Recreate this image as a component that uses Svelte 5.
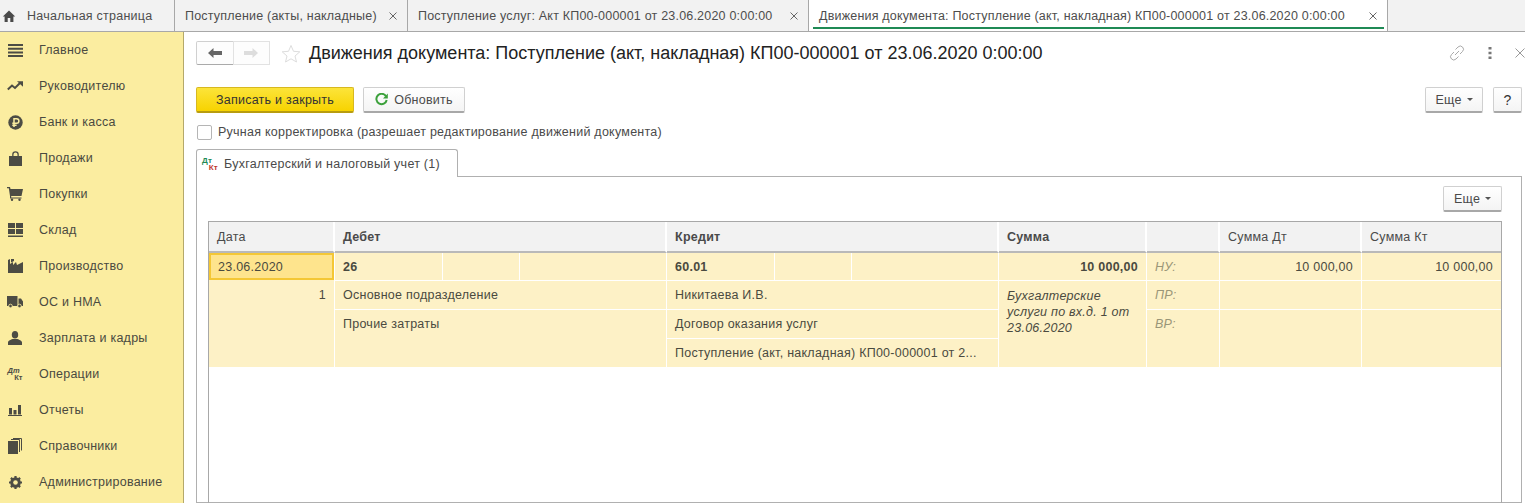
<script>
  const nav = [
    ['Главное', 'menu'], ['Руководителю', 'trend'], ['Банк и касса', 'rub'], ['Продажи', 'bag'],
    ['Покупки', 'cart'], ['Склад', 'stock'], ['Производство', 'factory'], ['ОС и НМА', 'truck'],
    ['Зарплата и кадры', 'user'], ['Операции', 'dtkt'], ['Отчеты', 'chart'], ['Справочники', 'books'],
    ['Администрирование', 'gear']
  ];
  const tabs = [
    { t: 'Поступление (акты, накладные)', w: 233 },
    { t: 'Поступление услуг: Акт КП00-000001 от 23.06.2020 0:00:00', w: 401 }
  ];
</script>

<div class="app">
  <header class="tabs">
    <div class="tab home">
      <svg width="14" height="14" viewBox="0 0 14 14"><path d="M7 1.5 0.8 7.5H2.6V13H5.7V9H8.3V13H11.4V7.5H13.2Z" fill="#4a4a4a"/></svg>
      <span>Начальная страница</span>
    </div>
    {#each tabs as tab}
      <div class="tab" style="width:{tab.w}px">
        <span>{tab.t}</span>
        <svg class="x" width="8" height="8" viewBox="0 0 8 8"><path d="M.5.5l7 7M7.5.5l-7 7" stroke="#666" fill="none"/></svg>
      </div>
    {/each}
    <div class="tab active">
      <span>Движения документа: Поступление (акт, накладная) КП00-000001 от 23.06.2020 0:00:00</span>
      <svg class="x" width="8" height="8" viewBox="0 0 8 8"><path d="M.5.5l7 7M7.5.5l-7 7" stroke="#666" fill="none"/></svg>
    </div>
  </header>

  <div class="body">
    <aside class="side">
      {#each nav as item}
        <div class="nav">
          <span class="ic">
            {#if item[1] === 'menu'}
              <svg width="15" height="13" viewBox="0 0 15 13"><path d="M0 0h15v2H0zM0 3.7h15v2H0zM0 7.4h15v2H0zM0 11h15v2H0z" fill="#4c4c44"/></svg>
            {:else if item[1] === 'trend'}
              <svg width="16" height="10" viewBox="0 0 16 10"><path d="M.8 8.5 5 4.5l3 2.5 5-5" fill="none" stroke="#4c4c44" stroke-width="2"/><path d="M10 .3h6v5.5z" fill="#4c4c44"/></svg>
            {:else if item[1] === 'rub'}
              <svg width="15" height="15" viewBox="0 0 15 15"><circle cx="7.5" cy="7.5" r="7.2" fill="#4c4c44"/><path d="M6 12V3.7h2.6a2.3 2.3 0 0 1 0 4.6H4.3M4.3 10.2H8.6" fill="none" stroke="#fbeda0" stroke-width="1.5"/></svg>
            {:else if item[1] === 'bag'}
              <svg width="13" height="15" viewBox="0 0 13 15"><path d="M0 5h3.2V3.6a3.3 3.3 0 0 1 6.6 0V5H13v10H0zM4.5 5h4V3.6a2 2 0 0 0-4 0z" fill="#4c4c44" fill-rule="evenodd"/></svg>
            {:else if item[1] === 'cart'}
              <svg width="16" height="14" viewBox="0 0 16 14"><path d="M0 0h3l.5 2H16l-1.5 7H4.2v1.4H14.5V11.4H3V9L1.8 1.2H0z" fill="#4c4c44"/><circle cx="5" cy="12.8" r="1.2" fill="#4c4c44"/><circle cx="12.5" cy="12.8" r="1.2" fill="#4c4c44"/></svg>
            {:else if item[1] === 'stock'}
              <svg width="15" height="14" viewBox="0 0 15 14"><path d="M0 0h7v5H0zM8 0h7v5H8zM0 6h7v5H0zM8 6h7v5H8zM0 12.5h15V14H0z" fill="#4c4c44"/></svg>
            {:else if item[1] === 'factory'}
              <svg width="15" height="14" viewBox="0 0 15 14"><path d="M0 14V1l2-1v5L5 3v3l3-3 1 3 6-3v11zM3 0h3v2L3 3.6z" fill="#4c4c44"/></svg>
            {:else if item[1] === 'truck'}
              <svg width="16" height="12" viewBox="0 0 16 12"><path d="M0 0h10.5v10H0zM11.500 2.500h2.500l2 3V10h-4.500z" fill="#4c4c44"/><circle cx="3.500" cy="10" r="1.800" fill="#4c4c44" stroke="#fbeda0" stroke-width=".8"/><circle cx="12.500" cy="10" r="1.800" fill="#4c4c44" stroke="#fbeda0" stroke-width=".8"/></svg>
            {:else if item[1] === 'user'}
              <svg width="14" height="14" viewBox="0 0 14 14"><ellipse cx="7" cy="3.800" rx="3.200" ry="3.800" fill="#4c4c44"/><path d="M0 14v-2.500C0 9.500 3 8.800 4.500 8h5c1.500.8 4.500 1.500 4.500 3.500V14z" fill="#4c4c44"/></svg>
            {:else if item[1] === 'dtkt'}
              <span class="dk"><i>Дт</i><i>Кт</i></span>
            {:else if item[1] === 'chart'}
              <svg width="14" height="12" viewBox="0 0 14 12"><path d="M1 4h3v6.500H1zM5.500 6h3v4.500h-3zM10 1h3v9.500h-3zM0 11h14v1H0z" fill="#4c4c44"/></svg>
            {:else if item[1] === 'books'}
              <svg width="14" height="16" viewBox="0 0 14 16"><path d="M0 3h10v13H0z" fill="#4c4c44"/><path d="M11.500 14V1.500H3M13.500 12.500V.5H5" fill="none" stroke="#4c4c44"/></svg>
            {:else}
              <svg width="15" height="15" viewBox="0 0 15 15"><circle cx="7.500" cy="7.500" r="4" fill="none" stroke="#4c4c44" stroke-width="2.600"/><path d="M7.500 1v13M1 7.500h13M2.900 2.900l9.200 9.200M12.100 2.900l-9.200 9.200" stroke="#4c4c44" stroke-width="2.200"/><circle cx="7.500" cy="7.500" r="2.300" fill="#fbeda0"/></svg>
            {/if}
          </span>
          <span>{item[0]}</span>
        </div>
      {/each}
    </aside>

    <main class="main">
      <div class="titlebar">
        <div class="navbtns">
          <div class="nb first">
            <svg width="14" height="10" viewBox="0 0 14 10"><path d="M0 5 5.500 0v3H14v4H5.500v3z" fill="#666"/></svg>
          </div>
          <div class="nb">
            <svg width="14" height="10" viewBox="0 0 14 10"><path d="M14 5 8.500 0v3H0v4h8.500v3z" fill="#ddd"/></svg>
          </div>
        </div>
        <svg class="star" width="20" height="19" viewBox="0 0 20 19"><path d="M10 1.500 12.500 7.300 18.800 7.800 14 12 15.500 18 10 14.800 4.500 18 6 12 1.200 7.800 7.500 7.300Z" fill="none" stroke="#ddd"/></svg>
        <h1>Движения документа: Поступление (акт, накладная) КП00-000001 от 23.06.2020 0:00:00</h1>
        <div class="winicons">
          <svg width="16" height="16" viewBox="0 0 16 16"><path d="M6.500 4.500 9 2a3 3 0 0 1 4.500 4.500L11 9M9.500 11.500 7 14a3 3 0 0 1-4.500-4.500L5 7M6 10l4-4" fill="none" stroke="#aaa" stroke-width="1"/></svg>
          <svg width="4" height="12" viewBox="0 0 4 12"><path d="M.5 0h3v2.500h-3zM.5 4.700h3v2.500h-3zM.5 9.400h3v2.500h-3z" fill="#777"/></svg>
          <svg width="10" height="10" viewBox="0 0 10 10"><path d="M.5.5l9 9M9.500.5l-9 9" stroke="#999" fill="none"/></svg>
        </div>
      </div>

      <div class="toolbar">
        <button class="btn primary">Записать и закрыть</button>
        <button class="btn refresh">
          <svg width="13" height="13" viewBox="0 0 13 13"><path d="M11 3.200A5.200 5.200 0 1 0 11.700 7" fill="none" stroke="#3ca13c" stroke-width="2"/><path d="M12.800 .6v4.800H8z" fill="#3ca13c"/></svg>
          Обновить
        </button>
        <div class="spacer"></div>
        <button class="btn more">Еще <b class="caret"></b></button>
        <button class="btn help">?</button>
      </div>

      <label class="check"><span class="box"></span>Ручная корректировка (разрешает редактирование движений документа)</label>

      <div class="pagetabs">
        <div class="ptab">
          <span class="dk2"><i>Дт</i><i>Кт</i></span>
          Бухгалтерский и налоговый учет (1)
        </div>
      </div>

      <section class="panel">
        <div class="paneltools"><button class="btn more">Еще <b class="caret"></b></button></div>
        <div class="grid">
          <div class="h">Дата</div>
          <div class="h b">Дебет</div>
          <div class="h b">Кредит</div>
          <div class="h b">Сумма</div>
          <div class="h"></div>
          <div class="h">Сумма Дт</div>
          <div class="h end">Сумма Кт</div>

          <div class="c date"><span>23.06.2020</span></div>
          <div class="c triple b"><span class="p1">26</span><span class="p2"></span><span class="p3"></span></div>
          <div class="c triple b"><span class="p1">60.01</span><span class="p2"></span><span class="p3"></span></div>
          <div class="c r b">10 000,00</div>
          <div class="c lbl">НУ:</div>
          <div class="c r">10 000,00</div>
          <div class="c r end">10 000,00</div>

          <div class="c r s3 top">1</div>
          <div class="c">Основное подразделение</div>
          <div class="c">Никитаева И.В.</div>
          <div class="c s3 note">Бухгалтерские услуги по вх.д. 1 от 23.06.2020</div>
          <div class="c lbl">ПР:</div>
          <div class="c"></div>
          <div class="c end"></div>

          <div class="c s2 top">Прочие затраты</div>
          <div class="c">Договор оказания услуг</div>
          <div class="c s2 top lbl">ВР:</div>
          <div class="c s2"></div>
          <div class="c s2 end"></div>

          <div class="c">Поступление (акт, накладная) КП00-000001 от 2...</div>
        </div>
      </section>
    </main>
  </div>
</div>

<style>
  :global(body) { margin: 0; background: #fff; }
  .app {
    width: 1525px; height: 503px; overflow: hidden;
    font-family: "Liberation Sans", Arial, sans-serif; font-size: 12.5px; color: #4a4a4a;
    display: flex; flex-direction: column;
  }
  .tabs { display: flex; height: 31px; flex: none; background: #f2f2f2; border-bottom: 1px solid #a8a8a8; }
  .tab {
    box-sizing: border-box; display: flex; align-items: center; justify-content: space-between;
    padding: 0 10px 0 10px; border-right: 1px solid #a8a8a8; white-space: nowrap; letter-spacing: .2px; color: #4d4d4d;
  }
  .home { width: 175px; padding: 0 18px 0 2px; gap: 11px; justify-content: flex-start; }
  .home span { letter-spacing: .25px; }
  .active { width: 579px; background: #fff; position: relative; }
  .active::after { content: ""; position: absolute; left: 4px; right: 3px; bottom: 2px; height: 2px; background: #1f8a55; }
  .x { flex: none; }

  .body { display: flex; flex: 1; min-height: 0; }
  .side { width: 183px; flex: none; background: #fbeda0; border-right: 1px solid #b5a96a; box-sizing: content-box; }
  .nav { height: 36px; display: flex; align-items: center; letter-spacing: .25px; color: #4a4a40; }
  .ic { width: 39px; flex: none; display: flex; justify-content: center; padding-right: 9px; box-sizing: border-box; }
  .dk { display: flex; flex-direction: column; font-size: 7.500px; font-weight: bold; line-height: 7px; color: #4c4c44; width: 15px; letter-spacing: 0; }
  .dk i { font-style: italic; }
  .dk i:last-child { align-self: flex-end; font-style: normal; }

  .main { flex: 1; min-width: 0; padding: 0 3px 0 12px; display: flex; flex-direction: column; }
  .titlebar { display: flex; align-items: center; height: 24px; margin-top: 9px; }
  .navbtns { display: flex; width: 74px; height: 24px; flex: none; }
  .nb { flex: 1; display: flex; align-items: center; justify-content: center; border: 1px solid #e2e2e2; box-sizing: border-box; background: #fdfdfd; margin-left: -1px; }
  .nb.first { border-color: #d0d0d0; border-bottom-color: #aaa; border-radius: 2px 0 0 2px; margin-left: 0; }
  .star { margin-left: 11px; flex: none; }
  h1 { margin: 0 0 0 8px; font-size: 18px; font-weight: normal; color: #222; white-space: nowrap; flex: 1; letter-spacing: 0; }
  .winicons { display: flex; align-items: center; gap: 23px; margin-right: -3px; flex: none; }
  .winicons svg:last-child { margin-right: 0; }

  .toolbar { display: flex; align-items: flex-start; margin-top: 22px; gap: 9px; height: 27px; }
  .spacer { flex: 1; }
  .btn {
    box-sizing: border-box; height: 26px; font: inherit; letter-spacing: .25px; color: #4a4a4a; padding: 0; white-space: nowrap;
    border: 1px solid #d0d0d0; border-bottom: 2px solid #a8a8a8; border-radius: 2px;
    background: linear-gradient(#fff, #f4f4f4);
    display: inline-flex; align-items: center; justify-content: center; gap: 6px;
  }
  .primary { width: 158px; background: linear-gradient(#fce43a, #f7d300); border-color: #d7b820; border-bottom-color: #b89c10; color: #333; }
  .refresh { width: 102px; }
  .more { width: 58px; gap: 5px; }
  .help { width: 29px; font-size: 14px; color: #333; margin-left: 1px; }
  .caret { width: 0; height: 0; border: 3px solid transparent; border-top-color: #555; border-bottom: 0; }

  .check { display: flex; align-items: center; height: 16px; margin-top: 10px; margin-left: 1px; letter-spacing: .25px; }
  .box { width: 13px; height: 13px; border: 1px solid #b5b5b5; border-radius: 2px; background: #fff; margin-right: 6px; flex: none; }

  .pagetabs { display: flex; margin-top: 9px; height: 28px; flex: none; position: relative; z-index: 1; }
  .ptab {
    box-sizing: border-box; width: 262px; height: 28px; border: 1px solid #b0b0b0; border-bottom: 0; border-radius: 3px 3px 0 0;
    background: #fff; display: flex; align-items: center; gap: 6px; padding-left: 5px; letter-spacing: .25px;
  }
  .dk2 { display: flex; flex-direction: column; font-size: 8px; font-weight: bold; line-height: 7px; width: 16px; }
  .dk2 i { font-style: normal; color: #1f8a55; }
  .dk2 i:last-child { color: #c0392b; align-self: flex-end; }

  .panel { flex: 1; margin-top: -1px; border: 1px solid #b0b0b0; padding: 9px 19px 0 11px; min-height: 0; }
  .paneltools { display: flex; justify-content: flex-end; height: 26px; margin-bottom: 9px; }
  .paneltools .more { width: 59px; }

  .grid {
    display: grid;
    grid-template-columns: 126px 332px 332px 148px 73px 142px 1fr;
    grid-template-rows: 31px 28px 29px 29px 29px;
    border-top: 1px solid #a8a8a8; border-left: 1px solid #a8a8a8; border-right: 1px solid #a8a8a8;
    margin-right: 0;
    position: relative;
    height: 400px; align-content: start;
  }
  .h {
    background: #f2f2f2; border-right: 2px solid #fff; border-bottom: 2px solid #b9b9b9; box-sizing: border-box;
    display: flex; align-items: center; padding-left: 8px; letter-spacing: .25px;
  }
  .h.end { border-right: 0; }
  .b { font-weight: bold; }
  .c {
    box-sizing: border-box; background: #fdf1c6; border-right: 1px solid #fff; border-bottom: 1px solid #fff;
    display: flex; align-items: center; padding: 0 8px; white-space: nowrap; letter-spacing: .25px; color: #4a4a40; min-width: 0;
  }
  .c.end { border-right: 0; }
  .r { justify-content: flex-end; }
  .top { align-items: flex-start; padding-top: 7px; }
  .s2 { grid-row: span 2; }
  .s3 { grid-row: span 3; }
  .c.s2:last-child { border-bottom: 0; }
  .lbl { font-style: italic; color: #9a9678; }
  .note { font-style: italic; white-space: normal; align-items: flex-start; padding: 7px 8px; line-height: 16px; }
  .date { padding: 0; border: 0; border-right: 1px solid #fff; }
  .date span { flex: 1; align-self: stretch; display: flex; align-items: center; box-sizing: border-box; padding-left: 7px; background: #fee48d; border: 2px solid #f4c735; margin-bottom: 1px; }
  .triple { padding: 0; align-items: stretch; }
  .triple span { display: flex; align-items: center; box-sizing: border-box; padding-left: 8px; }
  .p1 { width: 108px; border-right: 1px solid #fff; }
  .p2 { width: 77px; border-right: 1px solid #fff; }
  .p3 { flex: 1; }
</style>
